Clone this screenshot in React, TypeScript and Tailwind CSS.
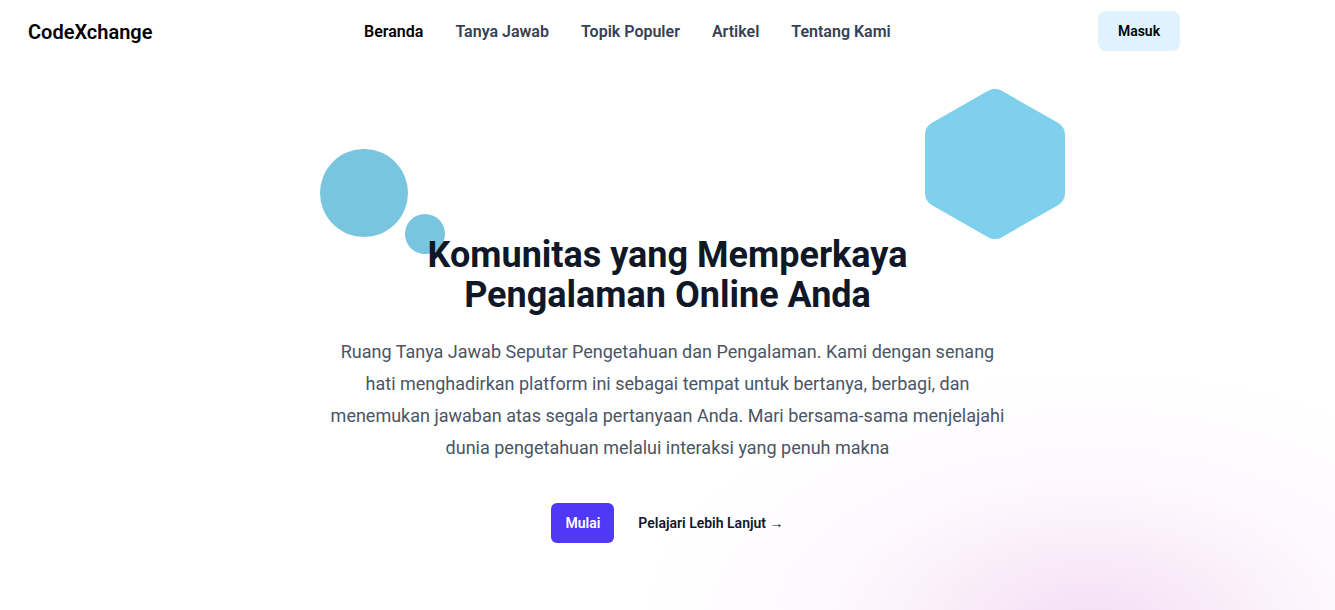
import { useState } from 'react';

const links = ['Beranda', 'Tanya Jawab', 'Topik Populer', 'Artikel', 'Tentang Kami'];

function Hexagon() {
  return (
    <svg width="140" height="150" viewBox="0 0 140 150" className="block">
      <polygon
        points="70,14 126,46 126,104 70,136 14,104 14,46"
        fill="#7fd0ec"
        stroke="#7fd0ec"
        strokeWidth="28"
        strokeLinejoin="round"
      />
    </svg>
  );
}

export default function App() {
  const [active] = useState('Beranda');

  return (
    <div className="relative min-h-[610px] overflow-hidden bg-white font-['Roboto','Noto_Sans',sans-serif]">
      <div className="pointer-events-none absolute left-[640px] top-[370px] h-[520px] w-[900px] bg-[radial-gradient(closest-side,rgba(240,210,240,0.75),rgba(250,235,250,0.35)_55%,rgba(255,255,255,0)_100%)]" />

      <header className="relative flex h-[62px] items-center px-7 pt-[2px]">
        <div className="w-[336px] text-[20px] font-semibold text-black">CodeXchange</div>
        <nav className="flex items-center gap-8">
          {links.map((l) => (
            <a
              key={l}
              href="#"
              className={
                l === active
                  ? 'text-[16px] font-semibold text-black'
                  : 'text-[16px] font-semibold text-gray-700'
              }
            >
              {l}
            </a>
          ))}
        </nav>
        <button className="ml-auto mr-[127px] -mt-[2px] h-[40px] w-[82px] rounded-lg bg-sky-100 text-sm font-semibold text-black">
          Masuk
        </button>
      </header>

      <section className="relative">
        <div className="absolute left-[320px] top-[87px] h-[88px] w-[88px] rounded-full bg-[#79c5e0]" />
        <div className="absolute left-[405px] top-[152px] h-[40px] w-[40px] rounded-full bg-[#79c5e0]" />
        <div className="absolute left-[925px] top-[27px]">
          <Hexagon />
        </div>

        <div className="relative mx-auto w-[680px] pt-[173px] text-center">
          <h1 className="text-4xl font-bold text-gray-900">
            Komunitas yang Memperkaya Pengalaman Online Anda
          </h1>
          <p className="mt-[21px] text-lg leading-8 text-gray-600">
            Ruang Tanya Jawab Seputar Pengetahuan dan Pengalaman. Kami dengan senang hati menghadirkan platform ini
            sebagai tempat untuk bertanya, berbagi, dan menemukan jawaban atas segala pertanyaan Anda. Mari
            bersama-sama menjelajahi dunia pengetahuan melalui interaksi yang penuh makna
          </p>
          <div className="mt-[39px] flex items-center justify-center gap-x-6">
            <a href="#" className="rounded-md bg-indigo-600 px-3.5 py-2.5 text-sm font-semibold text-white">
              Mulai
            </a>
            <a href="#" className="text-sm font-semibold text-gray-900">
              Pelajari Lebih Lanjut <span aria-hidden="true">→</span>
            </a>
          </div>
        </div>
      </section>
    </div>
  );
}
